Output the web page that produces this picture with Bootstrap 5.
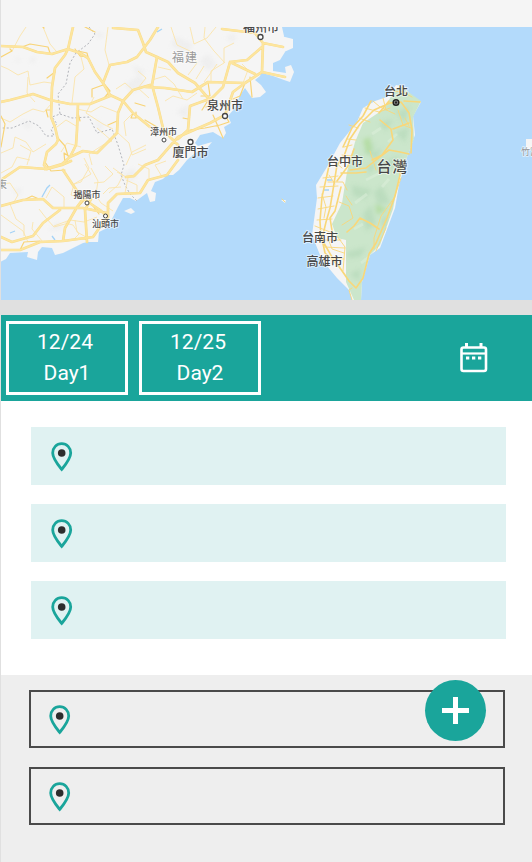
<!DOCTYPE html>
<html lang="zh-Hant">
<head>
<meta charset="utf-8">
<meta name="viewport" content="width=device-width, initial-scale=1">
<title>Trip planner</title>
<link href="https://cdn.jsdelivr.net/npm/bootstrap@5.3.0/dist/css/bootstrap.min.css" rel="stylesheet">
<style>
  :root { --teal: #1aa59b; --line: #e0e0e0; }
  body { font-family: Roboto, "Noto Sans CJK TC", sans-serif; background: #eee; }
  .app { border-left: 1px solid var(--line); }
  .topbar { height: 27px; background: #f5f5f5; }
  .map { background: #b3dafb; border-bottom: 15px solid var(--line); }
  .map text { font-family: Roboto, "Noto Sans CJK TC", sans-serif; font-weight: 500; fill: #484848; text-anchor: middle;
    paint-order: stroke; stroke: #fff; stroke-width: 2px; stroke-opacity: .5; stroke-linejoin: round; }
  .map .faint { fill: #999; font-weight: 400; }
  .days { background: var(--teal); padding: 6px 44px 6px 5px; gap: 11px; }
  .day { width: 122px; height: 74px; border: 3px solid #fff; border-radius: 0; color: #fff;
    font-size: 21px; line-height: 31px; padding: 0; }
  .day:hover { color: #fff; background: #159088; border-color: #fff; }
  .stops { display: grid; gap: 19px; }
  .planned { padding: 26px 26px 36px 30px; }
  .saved { padding: 15px 27px 37px 28px; background: #eee; }
  .stop { height: 58px; padding: 2px 0 0 20px; }
  .planned .stop { background: #e0f2f2; }
  .saved .stop { border: 2px solid #4a4a4a; padding-left: 18px; }
  .add { right: 46px; top: 5px; width: 61px; height: 61px; background: var(--teal); }
  .add:hover { background: #159088; }
</style>
<script src="https://cdn.jsdelivr.net/npm/bootstrap@5.3.0/dist/js/bootstrap.bundle.min.js"></script>
</head>
<body>
<svg class="d-none" aria-hidden="true">
  <symbol id="pin" viewBox="0 0 22 30">
    <path d="M10.700 1.700C5.500 1.700 1.700 5.700 1.700 11C1.700 16.500 6.300 22 10.700 27.400C15.100 22 19.700 16.500 19.700 11C19.700 5.700 15.900 1.700 10.700 1.700Z" fill="none" stroke="#1aa59b" stroke-width="2.800"/>
    <circle cx="10.700" cy="11" r="3.800" fill="#2d2d2d"/>
  </symbol>
</svg>
<div class="app min-vh-100 d-flex flex-column">
  <header class="topbar"></header>
  <main>
    <div class="map">
      <svg class="d-block w-100" viewBox="1 27 531 273" role="img" aria-label="台灣地圖">
        <defs>
          <filter id="soft" x="-20%" y="-20%" width="140%" height="140%"><feGaussianBlur stdDeviation="2"/></filter>
          <clipPath id="green"><path d="M394 91L400 86L407 91L421 101L413 117L414 139L407 157L398 183L393 209L380 245L370 255L362 282L361 300L354 300L346 282L346 240L337 238L332 224L342 203L347 172L355 142L363 123L384 109Z"/></clipPath>
        </defs>
        <g fill="#f5f5f5">
          <path d="M0 27H282L284 36L283 44L285 52L280 60L273 63V71L262 71L260 76L255 80L261 85L266 92L260 97L252 98L245 88L240 95L235 108L228 116L231 123L224 127L226 133L223 138L213 132L200 135L195 143L198 146L212 142L207 148L195 153L187 160L179 170L173 175L167 175L163 179L155 182L151 191L156 193L155 201L150 202L147 193L140 198L136 201L130 198L123 198L118 207L113 217L107 228L99 232L98 242H88L83 243L63 253L55 255L52 248L42 247L38 252L37 260L27 257L28 252L10 253L6 259L0 262Z"/>
          <path d="M281 36L293 39L293 48L284 52Z"/>
          <path d="M262 68L273 71L286 73L285 67L291 65L294 72L290 82L284 80L273 76L262 73Z"/>
          <path d="M124 211L131 208L135 212L131 214Z M281 200L286 200L285 203Z M526 139H532V149H526Z"/>
          <path d="M387 97L396 85L406 87L408 93L421 102L413 116L415 135L407 157L399 185L395 208L380 248L370 255L362 282L361 300H352L349 290L337 278L322 260L312 235L317 198L316 185L327 167L340 143L357 122L363 108L375 101Z"/>
        </g>
        <g fill="#e9e9e9" opacity=".55" filter="url(#soft)">
          <path d="M28 60l8-4-2 8zM15 57l6 3-4 3zM125 84l15-9 5 8-12 10zM175 36l18 8-5 9-17-7zM199 61l9-7 9 11-9 6zM95 31l10 4-7 4zM20 120l12 4-4 6zM95 119l9 7-5 6zM122 174l12-6 3 10-11 3zM48 231l10-10 5 7zM12 190l10-2-2 8zM176 112l13-8-2 15zM225 38l11-5-2 10zM132 65l14 6-8 5z"/>
        </g>
        <g clip-path="url(#green)">
          <path d="M325 80H425V300H325Z" fill="#cbe6cb"/>
          <g fill="#b4d8b8" opacity=".65" filter="url(#soft)">
            <path d="M379 123l14-4-7 12zM390 103l10 9 9-6-4 18zM363 151l12-9-3 10 10-4-5 12zM384 162l16-6-8 12-14 4zM396 133l13-6-4 15zM352 185l20 5-7 9-12-3zM363 214l8-9 5 19-10 7zM374 192l8-6 8 17-12 2zM347 252l19-5-6 10-12 1zM350 274l10-5-1 12zM381 221l7-8-3 18zM367 166l10-3-8 12z"/>
            <path d="M363 140l7-3 2 14-5 4zM375 204l12 5-10 6z" fill="#a9d890"/>
          </g>
          <path d="M366 180l14-7M355 203l12-9M372 134l9-6M361 263l8-6M382 187l7-8M388 142l9-8M354 229l9-5" stroke="#deefdc" stroke-width="3" fill="none" opacity=".5"/>
        </g>
        <path d="M42 197L47 188L50 185M10 233L15 231M162 29L157 32M55 240l-3-4M327 180h5M324 190h5" stroke="#a5d3f6" stroke-width="1.300" fill="none"/>
        <g fill="none" stroke="#b3b5bb" stroke-width="1" stroke-dasharray="2 2">
          <path d="M89 27L95 34L88 44L76 53L70 63L66 84L58 94L60 114L52 117L57 124L51 129L54 136L46 136L39 126L29 121L12 128L1 128"/>
          <path d="M60 114L72 118L89 117L97 133L112 129L118 145L124 165L121 175L125 185L130 194L137 201"/>
        </g>
        <g fill="none" stroke="#fbe4ab" stroke-width=".9" stroke-linejoin="round">
          <path d="M1 66L8 69L18 75L28 71L30 85L44 82L51 83M12 51L20 36L26 27M28 77L27 93L35 102M43 27L50 44L56 51M80 53L84 69L75 77L72 103M109 65L105 50L108 27M133 90L125 83L116 89M138 71L146 78L138 88L149 98"/>
          <path d="M1 118L10 122L23 114L33 109L44 112L51 104M1 153L13 148L15 137L26 142L33 152L46 144M27 165L31 151L20 145M76 126L66 120L57 127M94 97L86 113L103 124L113 129M77 109L91 112L101 106L119 113M97 128L112 141L103 145L89 154L92 165"/>
          <path d="M118 133L129 143L132 155L146 149M126 165L132 152L146 145M133 113L124 122L126 136M152 80L165 76L174 84L183 99M165 101L173 96L187 100L197 93M158 67L171 70M204 66L196 79M217 64L210 74L204 82M188 75L197 63L190 51L177 45L171 27M190 27L194 44L207 38L216 27M205 27L204 38L214 51L225 63M211 83L211 71L224 63L224 48L234 43M242 64L248 70L243 83"/>
          <path d="M1 184L10 183L18 195L14 202M10 204L16 219L24 225L24 236M28 242L23 231L1 215M39 209L46 218L54 227L65 224M54 226L70 220L84 222L97 217M64 208L64 197L52 187L46 198M74 184L91 174L85 164M74 184L71 195L83 199M95 194L101 203L113 211M91 168L98 181L96 194M109 193L118 185L123 175L113 168M125 193L128 178L117 172M137 193L137 185L126 180M149 178L149 169L138 164M161 175L155 165L166 161"/>
          <path d="M43 242L32 229L33 222M72 241L79 234L73 225L65 223M75 220L77 232L86 237M121 187L109 188L103 194M61 152L67 143L81 147M1 173L12 167L17 157L30 160M84 158L89 168L81 182L74 184M105 166L113 174L104 182L94 183"/>
        </g>
        <g fill="none" stroke="#f8d477" stroke-linejoin="round" stroke-linecap="round">
          <path stroke-width="1.200" d="M22 47L30 44L42 46L48 47L50 53M10 49L12 51L1 57M43 27L44 28M78 51L87 53L88 57L80 56L75 49M85 27L95 32M103 85L92 89L92 97M105 85L110 91L105 97M51 110L46 110L48 117M78 113L80 121M117 121L108 125M133 113L131 118L136 118L136 112M145 106L135 103M57 137L65 146L68 156M1 116L5 124L1 147M70 157L64 153L65 164M55 72L47 78M24 200L32 196L39 199M20 250L24 242L40 241M65 170L51 171L45 162M85 199L78 207M82 199L90 202L99 214M183 118L188 119M157 127L145 120M158 160L145 165M190 130L205 128L220 125M213 115L223 138M225 115L229 122L220 125M206 107L215 104M245 83L240 96L233 99M250 77L252 97M208 82L210 96L201 96M207 102L202 110"/>
        </g>
        <g fill="none" stroke-linejoin="round" stroke-linecap="round">
          <g stroke="#f8dc8c" stroke-width="2.700">
            <path id="r" d="M1 46L23 47L37 52L52 54L68 49L80 53L88 58L95 72L103 83L110 95L123 101L133 113L150 127M68 49L65 55L55 68L52 87L51 117L55 127L58 140L56 144L47 152L44 165L47 169M1 102L10 100L33 94L50 100L70 104H90L110 96M78 104L77 130L76 145L70 157L62 164L45 169M70 157L83 151L97 153L117 133L118 113L123 101L133 90L150 85M103 83L110 65L127 62L137 57L150 40L158 27M113 28L138 30L143 43L146 52L157 57L168 62L178 73L195 83L208 98M73 27L68 49"/>
            <path id="s" d="M157 57L152 85L158 107L163 128L170 137L178 145M145 87L165 88L192 92L208 82L245 83L262 72L263 43L255 33L222 29M262 47L247 60L230 62L223 87L212 98L190 106L188 130L178 139M230 62L255 74M262 72L285 77M263 43L283 47M245 83L233 92L225 115L210 123L178 137L158 160L145 165L134 176M1 180L20 167L47 169L62 165L71 161M63 170L73 185L82 198L100 210L108 217M1 206L23 200L43 199L53 208L83 208L107 213M1 237L12 242L33 236L43 223L60 210M1 250L20 250L40 242L63 241L93 237L100 227L108 217L108 203L117 194L140 193L148 180L167 175L178 160M63 241L65 228L77 207L83 199M87 242L85 210L91 199M134 176L126 177"/>
          </g>
          <g stroke="#fde59e" stroke-width="1.800"><use href="#r"/><use href="#s"/></g>
        </g>
        <g fill="none" stroke="#f9d779" stroke-linejoin="round" stroke-linecap="round">
          <path stroke-width="1.600" d="M401 102L390 103L374 110L360 124L350 139L344 156L337 165L333 190L330 208L326 222L322 239L325 253L338 265L349 281L356 288L363 278L369 254L376 243L387 218L395 196L400 175L401 160M401 102L409 113L412 130L411 153M371 101L363 116L352 128L343 147M404 101L420 102M329 166L322 197L320 221L321 238L332 257L345 275M341 187L335 211L330 218L333 237M354 149L348 166L337 181M350 170L366 168L376 160L389 150L400 152L409 154M372 160L382 155L393 140L391 129L380 120M347 232L354 226L360 218L370 223L379 229M393 129L409 123M341 173H356L366 172M389 101L379 113"/>
          <path stroke-width=".9" d="M365 108L379 112L390 108M373 101L380 107L395 114M383 98L386 110M394 91L403 92L412 97M398 110L403 125L411 128M405 118L409 126M323 178L338 176M320 187L338 186M318 198L333 196M318 209L334 206M317 220L332 219M315 226L330 232M320 240L341 240M324 247L345 248M325 257L344 259M322 194L326 207L324 218M329 241L332 249L344 253M337 236L345 247L343 271M339 202L349 206L353 218L342 225M346 196L352 205M344 147L352 145M347 139L356 140M342 155L351 156M335 162L342 168M329 175L335 184M376 170L370 151M401 178L394 198L381 216L374 238L374 249M386 228L376 251M349 125L358 128M359 118L370 122M282 199L285 202M328 182L343 182L347 190M352 288L349 290L352 300"/>
        </g>
        <g fill="#fff" stroke="#444" stroke-width="1.300">
          <circle cx="260.500" cy="37" r="2.500"/><circle cx="225" cy="116" r="2.500"/><circle cx="190.500" cy="142" r="2.500"/>
          <circle cx="164" cy="140" r="2" stroke-width="1"/><circle cx="87" cy="203" r="2" stroke-width="1"/><circle cx="105.500" cy="216" r="2" stroke-width="1"/>
          <circle cx="396" cy="102.500" r="2.800" fill="#999" stroke="#222" stroke-width="1.500"/><circle cx="396" cy="102.500" r="1.200" fill="#222" stroke="none"/>
        </g>
        <g font-size="12">
          <text x="261" y="32">福州市</text>
          <text x="225" y="110">泉州市</text>
          <text x="190.500" y="157">廈門市</text>
          <text x="396" y="96">台北</text>
          <text x="345" y="166">台中市</text>
          <text x="320" y="242">台南市</text>
          <text x="324.500" y="266">高雄市</text>
          <text x="178" y="62" class="faint">福</text><text x="191" y="62" class="faint">建</text>
        </g>
        <g font-size="9">
          <text x="163.500" y="135">漳州市</text>
          <text x="87" y="198">揭陽市</text>
          <text x="105.500" y="227">汕頭市</text>
          <text x="530" y="155" class="faint">竹富</text>
          <text x="2" y="188" font-size="10" class="faint">東</text>
        </g>
        <g font-size="15"><text x="384" y="172">台</text><text x="400" y="172">灣</text></g>
      </svg>
    </div>

    <nav class="days d-flex align-items-center" aria-label="Days">
      <button type="button" class="btn day"><span class="d-block pe-1">12/24</span><span class="d-block">Day1</span></button>
      <button type="button" class="btn day"><span class="d-block pe-1">12/25</span><span class="d-block">Day2</span></button>
      <button type="button" class="btn p-0 border-0 ms-auto" aria-label="Calendar">
        <svg class="d-block" width="28" height="30" viewBox="0 0 28 30" fill="none" stroke="#fff">
          <rect x="1.500" y="4.500" width="24.500" height="23.500" rx="2" stroke-width="2.600"/>
          <path d="M1 10.500H26.500" stroke-width="2.200"/>
          <path d="M6.500 0V5M21 0V5" stroke-width="3"/>
          <path d="M6 15H9.300M12 15H15.300M18 15H21.300" stroke-width="3.200"/>
        </svg>
      </button>
    </nav>

    <section class="planned bg-white" aria-label="Planned stops">
      <ul class="stops list-unstyled m-0">
        <li class="stop d-flex align-items-center"><svg width="22" height="30"><use href="#pin"/></svg></li>
        <li class="stop d-flex align-items-center"><svg width="22" height="30"><use href="#pin"/></svg></li>
        <li class="stop d-flex align-items-center"><svg width="22" height="30"><use href="#pin"/></svg></li>
      </ul>
    </section>

    <section class="saved position-relative" aria-label="Saved places">
      <ul class="stops list-unstyled m-0">
        <li class="stop d-flex align-items-center"><svg width="22" height="30"><use href="#pin"/></svg></li>
        <li class="stop d-flex align-items-center"><svg width="22" height="30"><use href="#pin"/></svg></li>
      </ul>
      <button type="button" class="btn add position-absolute rounded-circle border-0 p-0 d-flex align-items-center justify-content-center" aria-label="Add place">
        <svg width="27" height="27" viewBox="0 0 27 27"><path d="M13.500 0V27M0 13.500H27" stroke="#fff" stroke-width="5"/></svg>
      </button>
    </section>
  </main>
</div>
</body>
</html>
